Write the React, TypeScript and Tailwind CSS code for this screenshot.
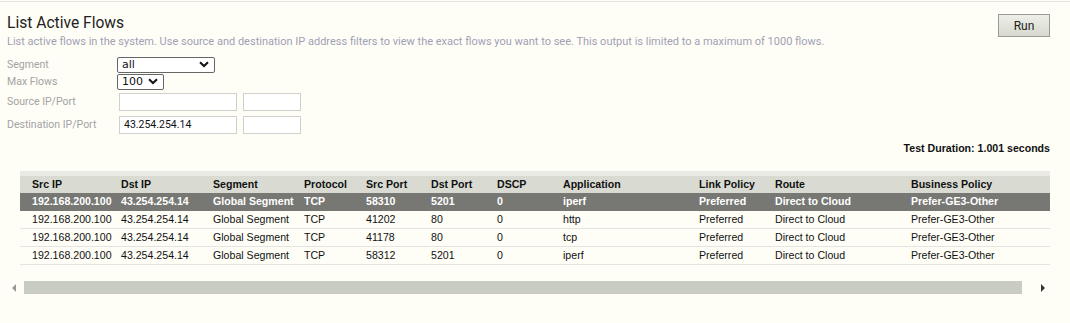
import React from "react";

const cols = [
  { h: "Src IP", w: "w-[89px]" },
  { h: "Dst IP", w: "w-[92px]" },
  { h: "Segment", w: "w-[91px]" },
  { h: "Protocol", w: "w-[62px]" },
  { h: "Src Port", w: "w-[65px]" },
  { h: "Dst Port", w: "w-[66px]" },
  { h: "DSCP", w: "w-[66px]" },
  { h: "Application", w: "w-[136px]" },
  { h: "Link Policy", w: "w-[76px]" },
  { h: "Route", w: "w-[136px]" },
  { h: "Business Policy", w: "flex-1" },
];

const rows = [
  ["192.168.200.100", "43.254.254.14", "Global Segment", "TCP", "58310", "5201", "0", "iperf", "Preferred", "Direct to Cloud", "Prefer-GE3-Other"],
  ["192.168.200.100", "43.254.254.14", "Global Segment", "TCP", "41202", "80", "0", "http", "Preferred", "Direct to Cloud", "Prefer-GE3-Other"],
  ["192.168.200.100", "43.254.254.14", "Global Segment", "TCP", "41178", "80", "0", "tcp", "Preferred", "Direct to Cloud", "Prefer-GE3-Other"],
  ["192.168.200.100", "43.254.254.14", "Global Segment", "TCP", "58312", "5201", "0", "iperf", "Preferred", "Direct to Cloud", "Prefer-GE3-Other"],
];

function Chevron() {
  return (
    <svg width="10" height="7" viewBox="0 0 10 7" className="shrink-0">
      <path d="M1 1.2 L5 5 L9 1.2" fill="none" stroke="#111" strokeWidth="2" />
    </svg>
  );
}

export default function App() {
  return (
    <div className="w-[1070px] h-[323px] bg-[#fefef7] overflow-hidden font-['Roboto',sans-serif] relative">
      <div className="h-[2px] border-b border-[#e6e6e0] mx-0" />
      <div className="flex justify-between pl-[7px] pr-[20px] pt-[11px]">
        <div>
          <div className="text-[15.6px] leading-[20px] text-[#222] font-normal">List Active Flows</div>
          <div className="text-[11px] leading-[13px] text-[#a29fb4] mt-[2px]">
            List active flows in the system. Use source and destination IP address filters to view the exact flows you want to see. This output is limited to a maximum of 1000 flows.
          </div>
        </div>
        <button className="w-[52px] h-[23px] mt-[1px] border border-[#9a9a94] bg-gradient-to-b from-[#eef0e8] to-[#d7d9cf] text-[12px] text-[#222] font-['Roboto',sans-serif] leading-none">
          Run
        </button>
      </div>

      <div className="pl-[7px] mt-[8px] text-[10.5px] text-[#a3a3a3]">
        <div className="flex items-center h-[17px]">
          <span className="w-[110px]">Segment</span>
          <div className="w-[98px] h-[16px] border border-[#666] rounded-[2px] bg-white flex items-center justify-between pl-[4px] pr-[5px] text-[11px] text-[#111] font-['DejaVu_Sans',sans-serif]">
            <span className="leading-none">all</span>
            <Chevron />
          </div>
        </div>
        <div className="flex items-center h-[17px]">
          <span className="w-[110px]">Max Flows</span>
          <div className="w-[47px] h-[16px] border border-[#666] rounded-[2px] bg-white flex items-center justify-between pl-[4px] pr-[5px] text-[11px] text-[#111] font-['DejaVu_Sans',sans-serif]">
            <span className="leading-none">100</span>
            <Chevron />
          </div>
        </div>
        <div className="flex items-center h-[20px] mt-[2px]">
          <span className="w-[112px]">Source IP/Port</span>
          <div className="w-[118px] h-[18px] border border-[#d0d0cc] bg-white" />
          <div className="w-[58px] h-[18px] border border-[#d0d0cc] bg-white ml-[6px]" />
        </div>
        <div className="flex items-center h-[20px] mt-[3px]">
          <span className="w-[112px]">Destination IP/Port</span>
          <div className="w-[118px] h-[18px] border border-[#d0d0cc] bg-white text-[10.5px] text-[#111] font-['Roboto',sans-serif] flex items-center pl-[4px]">
            43.254.254.14
          </div>
          <div className="w-[58px] h-[18px] border border-[#d0d0cc] bg-white ml-[6px]" />
        </div>
      </div>

      <div className="flex justify-end pr-[20px] mt-[7px] font-['Liberation_Sans',Arial,sans-serif] text-[10.6px] font-bold text-[#111] leading-[13px]">
        Test Duration: 1.001 seconds
      </div>

      <div className="ml-[20px] mr-[20px] mt-[16px] font-['Liberation_Sans',Arial,sans-serif] text-[10.6px]">
        <div className="h-[22px] flex flex-col">
          <div className="h-[5px] bg-[#e9eae3]" />
          <div className="flex-1 bg-[#d9dbd2] flex items-center pl-[12px] font-bold text-[#111]">
            {cols.map((c) => (
              <div key={c.h} className={`${c.w} shrink-0`}>{c.h}</div>
            ))}
          </div>
        </div>
        {rows.map((r, i) => (
          <div
            key={i}
            className={
              i === 0
                ? "h-[18px] flex items-center pl-[12px] bg-[#777873] text-white font-bold"
                : "h-[18px] flex items-center pl-[12px] text-[#111] border-b border-[#e4e5e0]"
            }
          >
            {r.map((v, j) => (
              <div key={j} className={`${cols[j].w} shrink-0`}>{v}</div>
            ))}
          </div>
        ))}
      </div>

      <div className="flex items-center ml-[12px] mr-[24px] mt-[16px] h-[13px]">
        <svg width="5" height="8" viewBox="0 0 5 8" className="shrink-0"><path d="M4 0 L0 4 L4 8 Z" fill="#999" /></svg>
        <div className="ml-[7px] w-[998px] h-[13px] bg-[#c9ccc3]" />
        <div className="flex-1" />
        <svg width="5" height="8" viewBox="0 0 5 8" className="shrink-0"><path d="M0 0 L4 4 L0 8 Z" fill="#333" /></svg>
      </div>
    </div>
  );
}
